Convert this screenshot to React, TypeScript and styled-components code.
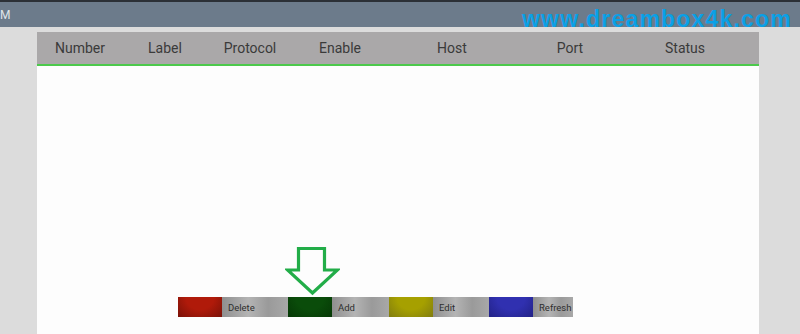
import React from "react";
import styled, { createGlobalStyle } from "styled-components";

const GlobalStyle = createGlobalStyle`
  html, body {
    margin: 0;
    padding: 0;
    width: 800px;
    height: 334px;
    overflow: hidden;
    background: #dcdcdc;
    font-family: "Roboto", "Liberation Sans", sans-serif;
  }
`;

const Screen = styled.div`
  position: relative;
  width: 800px;
  height: 334px;
  display: flex;
  flex-direction: column;
  background: #dcdcdc;
`;

const TitleBar = styled.div`
  height: 25px;
  border-top: 2px solid #2b3036;
  background: #6c7b8b;
  color: #dfe4ea;
  font-size: 12px;
  display: flex;
  align-items: center;
  overflow: hidden;
`;

const Watermark = styled.div`
  position: absolute;
  top: 6px;
  left: 522px;
  font-family: "Liberation Sans", sans-serif;
  font-weight: bold;
  font-size: 23px;
  letter-spacing: 1.2px;
  color: #0aa0e6;
`;

const Body = styled.div`
  flex: 1;
  padding: 5px 41px 0 37px;
  display: flex;
`;

const Panel = styled.div`
  flex: 1;
  display: flex;
  flex-direction: column;
  background: #fdfdfd;
`;

const HeaderRow = styled.div`
  height: 32px;
  background: #aaa8a9;
  border-bottom: 2px solid #4cc94c;
  display: flex;
  align-items: center;
`;

const HeaderCell = styled.div<{ $w: number }>`
  width: ${(p) => p.$w}px;
  text-align: center;
  font-size: 14px;
  color: #3a3a3a;
`;

const Content = styled.div`
  flex: 1;
  display: flex;
  flex-direction: column;
  align-items: flex-start;
  justify-content: flex-end;
  padding: 0 0 17px 141px;
`;

const ArrowWrap = styled.div`
  display: flex;
  padding-left: 107px;
  margin-bottom: 1px;
`;

const ButtonBar = styled.div`
  display: flex;
  height: 20px;
  width: 395px;
`;

const Swatch = styled.div<{ $c: string; $d: string }>`
  width: 44px;
  background: radial-gradient(ellipse at 50% 0%, ${(p) => p.$c} 0%, ${(p) => p.$c} 45%, ${(p) => p.$d} 100%);
`;

const Label = styled.div<{ $w: number }>`
  width: ${(p) => p.$w}px;
  display: flex;
  align-items: center;
  padding-left: 6px;
  box-sizing: border-box;
  font-size: 9.5px;
  color: #2e2e2e;
  background: linear-gradient(90deg, #8f8f8f 0%, #b4b4b4 40%, #9a9a9a 70%, #a8a8a8 100%);
`;

const columns: [string, number][] = [
  ["Number", 86],
  ["Label", 84],
  ["Protocol", 86],
  ["Enable", 94],
  ["Host", 130],
  ["Port", 106],
  ["Status", 124],
];

const buttons = [
  { c: "#b01a0a", d: "#7a1208", label: "Delete", w: 66 },
  { c: "#0a4c0a", d: "#063806", label: "Add", w: 57 },
  { c: "#a6a000", d: "#807c10", label: "Edit", w: 56 },
  { c: "#3030b0", d: "#222286", label: "Refresh", w: 40 },
];

const DownArrow = () => (
  <svg width="55" height="49" viewBox="0 0 55 49">
    <path
      d="M13.5 1.5 L13.5 23 L2.5 23 L27.5 46 L52.5 23 L39.5 23 L39.5 1.5 Z"
      fill="none"
      stroke="#22ad48"
      strokeWidth="3.2"
      strokeLinejoin="miter"
    />
  </svg>
);

export default function App() {
  return (
    <Screen>
      <GlobalStyle />
      <TitleBar>
        <span>M</span>
      </TitleBar>
      <Body>
        <Panel>
          <HeaderRow>
            {columns.map(([name, w]) => (
              <HeaderCell key={name} $w={w}>
                {name}
              </HeaderCell>
            ))}
          </HeaderRow>
          <Content>
            <ArrowWrap>
              <DownArrow />
            </ArrowWrap>
            <ButtonBar>
              {buttons.map((b) => (
                <React.Fragment key={b.label}>
                  <Swatch $c={b.c} $d={b.d} />
                  <Label $w={b.w}>{b.label}</Label>
                </React.Fragment>
              ))}
            </ButtonBar>
          </Content>
        </Panel>
      </Body>
      <Watermark>www.dreambox4k.com</Watermark>
    </Screen>
  );
}
